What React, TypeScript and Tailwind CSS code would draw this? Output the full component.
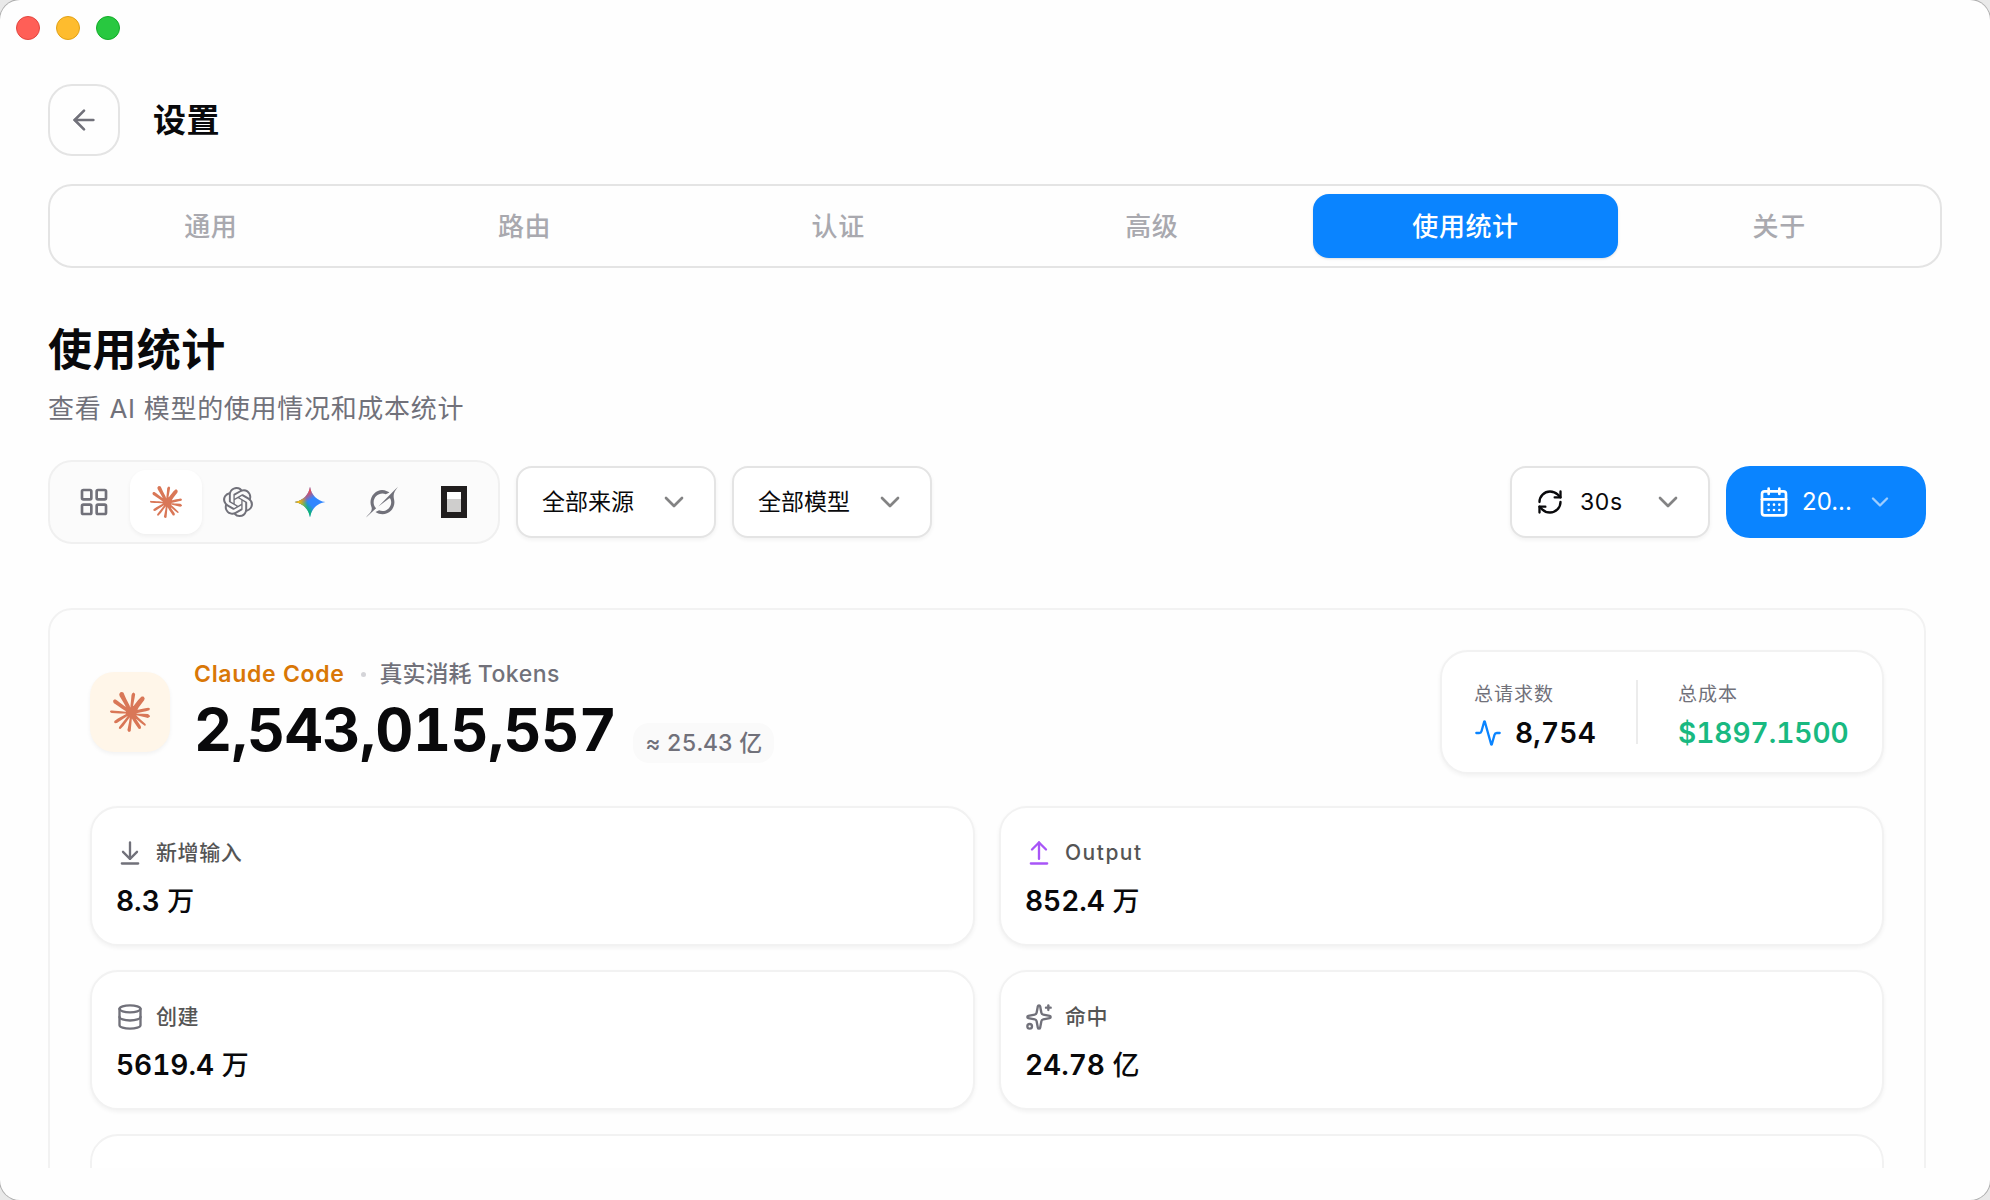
import type { ReactNode } from "react";
import {
    Activity,
    ArrowDownToLine,
    ArrowLeft,
    ArrowUpFromLine,
    CalendarDays,
    ChevronDown,
    Database,
    LayoutGrid,
    RefreshCw,
    Sparkles,
} from "lucide-react";
import { SiOpenai } from "react-icons/si";

const tabs = ["通用", "路由", "认证", "高级", "使用统计", "关于"];

function ClaudeIcon({ className }: { className?: string }) {
    return (
        <svg viewBox="0 0 24 24" fill="#D97757" className={className}>
            <path d="m4.7144 15.9555 4.7174-2.6471.079-.2307-.079-.1275h-.2307l-.7893-.0486-2.6956-.0729-2.3375-.0971-2.2646-.1214-.5707-.1215-.5343-.7042.0546-.3522.4797-.3218.686.0608 1.5179.1032 2.2767.1578 1.6514.0972 2.4468.255h.3886l.0546-.1579-.1336-.0971-.1032-.0972L6.973 9.8356l-2.55-1.6879-1.3356-.9714-.7225-.4918-.3643-.4614-.1578-1.0078.6557-.7225.8803.0607.2246.0607.8925.686 1.9064 1.4754 2.4893 1.8336.3643.3035.1457-.1032.0182-.0728-.164-.2733-1.3539-2.4467-1.445-2.4893-.6435-1.032-.17-.6194c-.0607-.255-.1032-.4674-.1032-.7285L6.287.1335 6.6997 0l.9957.1336.419.3642.6192 1.4147 1.0018 2.2282 1.5543 3.0296.4553.8985.2429.8318.091.255h.1579v-.1457l.1275-1.706.2368-2.0947.2307-2.6957.0789-.7589.3764-.9107.7468-.4918.5828.2793.4797.686-.0668.4433-.2853 1.8517-.5586 2.9021-.3643 1.9429h.2125l.2429-.2429.9835-1.3053 1.6514-2.0643.7286-.8196.85-.9046.5464-.4311h1.0321l.759 1.1293-.34 1.1657-1.0625 1.3478-.8804 1.1414-1.2628 1.7-.7893 1.36.0729.1093.1882-.0183 2.8535-.607 1.5421-.2794 1.8396-.3157.8318.3886.091.3946-.3278.8075-1.967.4857-2.3072.4614-3.4364.8136-.0425.0304.0486.0607 1.5482.1457.6618.0364h1.621l3.0175.2247.7892.522.4736.6376-.079.4857-1.2142.6193-1.6393-.3886-3.825-.9107-1.3113-.3279h-.1822v.1093l1.0929 1.0686 2.0035 1.8092 2.5075 2.3314.1275.5768-.3218.4554-.34-.0486-2.2039-1.6575-.85-.7468-1.9246-1.621h-.1275v.17l.4432.6496 2.3436 3.5214.1214 1.0807-.17.3521-.6071.2125-.6679-.1214-1.3721-1.9246L14.38 17.959l-1.1414-1.9428-.1397.079-.674 7.2552-.3156.3703-.7286.2793-.6071-.4614-.3218-.7468.3218-1.4753.3886-1.9246.3157-1.53.2853-1.9004.17-.6314-.0121-.0425-.1397.0182-1.4328 1.9672-2.1796 2.9446-1.7243 1.8456-.4128.164-.7164-.3704.0667-.6618.4008-.5889 2.386-3.0357 1.4389-1.882.929-1.0868-.0062-.1579h-.0546l-6.3385 4.1164-1.1293.1457-.4857-.4554.0608-.7467.2307-.2429 1.9064-1.3114Z" />
        </svg>
    );
}

function GeminiIcon({ className }: { className?: string }) {
    const star = "M12 .5C12.9 6.6 17.4 11.1 23.5 12 17.4 12.9 12.9 17.4 12 23.5 11.1 17.4 6.6 12.9.5 12 6.6 11.1 11.1 6.6 12 .5Z";
    return (
        <svg viewBox="0 0 24 24" className={className}>
            <defs>
                <linearGradient id="gm-green" x1="7" y1="15.5" x2="11" y2="12" gradientUnits="userSpaceOnUse">
                    <stop stopColor="#08B962" />
                    <stop offset="1" stopColor="#08B962" stopOpacity="0" />
                </linearGradient>
                <linearGradient id="gm-red" x1="8" y1="5.5" x2="11.5" y2="11" gradientUnits="userSpaceOnUse">
                    <stop stopColor="#F94543" />
                    <stop offset="1" stopColor="#F94543" stopOpacity="0" />
                </linearGradient>
                <linearGradient id="gm-yellow" x1="3.5" y1="13.5" x2="17.5" y2="12" gradientUnits="userSpaceOnUse">
                    <stop stopColor="#FABC12" />
                    <stop offset=".46" stopColor="#FABC12" stopOpacity="0" />
                </linearGradient>
            </defs>
            <path d={star} fill="#3186FF" />
            <path d={star} fill="url(#gm-green)" />
            <path d={star} fill="url(#gm-red)" />
            <path d={star} fill="url(#gm-yellow)" />
        </svg>
    );
}

function GrokIcon({ className }: { className?: string }) {
    return (
        <svg viewBox="0 0 24 24" fill="currentColor" className={className}>
            <path d="M9.27 15.29l7.978-5.897c.391-.29.95-.177 1.137.272.98 2.369.542 5.215-1.41 7.169-1.951 1.954-4.667 2.382-7.149 1.406l-2.711 1.257c3.889 2.661 8.611 2.003 11.562-.953 2.341-2.344 3.066-5.539 2.388-8.42l.006.007c-.983-4.232.242-5.924 2.75-9.383.06-.082.12-.164.179-.248l-3.301 3.305v-.01L9.267 15.292M7.623 16.723c-2.792-2.67-2.31-6.801.071-9.184 1.761-1.763 4.647-2.483 7.166-1.425l2.705-1.25a7.808 7.808 0 00-1.829-1A8.975 8.975 0 005.984 5.83c-2.533 2.536-3.33 6.436-1.962 9.764 1.022 2.487-.653 4.246-2.34 6.022-.599.63-1.199 1.259-1.682 1.925l7.62-6.815" />
        </svg>
    );
}

function OpenCodeIcon({ className }: { className?: string }) {
    return (
        <svg viewBox="0 0 26 32" className={className}>
            <path d="M0 0h26v32H0z" fill="#211E1E" />
            <path d="M6 6h14v7H6z" fill="#fff" />
            <path d="M6 13h14v13H6z" fill="#CFCECD" />
        </svg>
    );
}

const apps = [
    { key: "all", icon: <LayoutGrid className="size-8" /> },
    { key: "claude", icon: <ClaudeIcon className="size-8" />, active: true },
    { key: "codex", icon: <SiOpenai className="size-[30px]" /> },
    { key: "gemini", icon: <GeminiIcon className="size-8" /> },
    { key: "grok", icon: <GrokIcon className="size-8" /> },
    { key: "opencode", icon: <OpenCodeIcon className="h-8 w-[26px]" /> },
];

const metrics = [
    { label: "新增输入", value: "8.3", unit: "万", icon: <ArrowDownToLine className="size-7 text-[#71717a]" /> },
    { label: "Output", value: "852.4", unit: "万", latin: true, icon: <ArrowUpFromLine className="size-7 text-[#a855f7]" /> },
    { label: "创建", value: "5619.4", unit: "万", icon: <Database className="size-7 text-[#71717a]" /> },
    { label: "命中", value: "24.78", unit: "亿", icon: <Sparkles className="size-7 text-[#71717a]" /> },
];

function Select({ icon, children }: { icon?: ReactNode; children: ReactNode }) {
    return (
        <button className="flex h-[72px] w-[200px] items-center justify-between rounded-2xl border-2 border-[#e4e4e4] bg-white px-6 text-[23px] text-[#09090b] shadow-[0_2px_4px_rgba(0,0,0,0.05)]">
            <span className="flex items-center gap-4">
                {icon}
                <span>{children}</span>
            </span>
            <ChevronDown className="size-8 opacity-50" />
        </button>
    );
}

export default function App() {
    return (
        <div className="h-[1200px] w-[1990px] overflow-hidden bg-[#e9e9e9] font-['Inter','Noto_Sans_CJK_SC',sans-serif]">
            <div className="flex h-full flex-col overflow-hidden rounded-[20px] bg-[#fefefe] text-[#09090b] ring-1 ring-black/25">
                {/* Window controls */}
                <div className="flex gap-4 px-4 pt-4">
                    <span className="size-6 rounded-full border border-[#e2463f] bg-[#ff5f57]" />
                    <span className="size-6 rounded-full border border-[#e1a116] bg-[#febc2e]" />
                    <span className="size-6 rounded-full border border-[#12ac28] bg-[#28c840]" />
                </div>

                {/* Header */}
                <header className="mt-11 flex items-center gap-8 px-12">
                    <button className="flex size-[72px] items-center justify-center rounded-[24px] border-2 border-[#e4e4e4] text-[#71717a]">
                        <ArrowLeft className="size-8" />
                    </button>
                    <h1 className="pt-0.5 pl-px text-[33px] font-semibold tracking-[0.5px]">设置</h1>
                </header>

                <main className="mt-7 flex h-[984px] flex-col overflow-hidden px-12">
                    {/* Tabs */}
                    <nav className="grid h-[84px] shrink-0 grid-cols-6 gap-2 rounded-[24px] border-2 border-[#e4e4e4] p-2">
                        {tabs.map((tab) => (
                            <button
                                key={tab}
                                className={`rounded-2xl text-[26px] font-medium tracking-[0.6px] ${tab === "使用统计"
                                    ? "bg-[#0a84ff] text-white shadow-sm"
                                    : "text-[#a9a9af]"
                                }`}
                            >
                                {tab}
                            </button>
                        ))}
                    </nav>

                    <div className="mt-[54px] pr-4">
                        <h2 className="text-[44px] leading-[56px] font-bold tracking-[0.4px]">使用统计</h2>
                        <p className="mt-[11px] text-[26px] leading-[40px] tracking-[0.7px] text-[#71717a]">查看 AI 模型的使用情况和成本统计</p>

                        {/* Filters */}
                        <div className="mt-[31px] flex items-center justify-between">
                            <div className="flex items-center gap-4">
                                <div className="flex h-[84px] w-[452px] items-center rounded-[24px] border-2 border-[#f0f0f0] bg-[#fbfbfb] px-2 text-[#71717a]">
                                    {apps.map((app) => (
                                        <button
                                            key={app.key}
                                            className={`flex h-16 w-[72px] items-center justify-center rounded-2xl ${app.active ? "bg-white shadow-[0_2px_4px_rgba(0,0,0,0.05)]" : ""}`}
                                        >
                                            {app.icon}
                                        </button>
                                    ))}
                                </div>
                                <Select>全部来源</Select>
                                <Select>全部模型</Select>
                            </div>
                            <div className="flex items-center gap-4">
                                <Select icon={<RefreshCw className="size-7" />}>
                                    <span className="tracking-[0.6px]">30s</span>
                                </Select>
                                <button className="flex h-[72px] w-[200px] items-center rounded-[24px] bg-[#0a84ff] px-8 text-[24px] text-white">
                                    <CalendarDays className="size-8" />
                                    <span className="ml-3 flex-1 text-left">20...</span>
                                    <ChevronDown className="size-7 opacity-60" />
                                </button>
                            </div>
                        </div>

                        {/* Usage summary */}
                        <section className="mt-16 h-[700px] rounded-[24px] border-2 border-[#f2f2f2] px-10 pt-10">
                            <div className="flex items-center justify-between">
                                <div className="flex items-center gap-6">
                                    <div className="flex size-20 items-center justify-center rounded-[24px] bg-[#fff6e9] shadow-[0_2px_4px_rgba(0,0,0,0.05)]">
                                        <ClaudeIcon className="size-10" />
                                    </div>
                                    <div>
                                        <div className="flex items-center gap-4 text-[23px] leading-8">
                                            <span className="font-semibold tracking-[0.7px] text-[#d97706]">Claude Code</span>
                                            <span className="size-[5px] rounded-full bg-[#d4d4d8]" />
                                            <span className="-ml-0.5 font-medium text-[#71717a]">
                                                真实消耗 <span className="tracking-[0.5px]">Tokens</span>
                                            </span>
                                        </div>
                                        <div className="mt-1 flex items-baseline gap-[17px] tabular-nums">
                                            <span className="text-[59px] leading-[72px] font-bold tracking-[-0.5px]">2,543,015,557</span>
                                            <span className="h-10 rounded-2xl bg-[#fafafa] px-3 text-[23px] leading-10 font-medium tracking-[0.1px] text-[#71717a]">≈ 25.43 亿</span>
                                        </div>
                                    </div>
                                </div>
                                <div className="flex h-[124px] w-[444px] items-center rounded-[28px] border-2 border-[#f2f2f2] bg-white px-8 shadow-[0_2px_4px_rgba(0,0,0,0.05)]">
                                    <div className="pt-[7px]">
                                        <div className="text-[19px] leading-8 tracking-[1px] text-[#71717a]">总请求数</div>
                                        <div className="mt-0.5 flex items-center gap-[13px] text-[28px] leading-10 font-semibold tabular-nums">
                                            <Activity className="size-7 text-[#0a84ff]" />
                                            <span className="tracking-[0.2px]">8,754</span>
                                        </div>
                                    </div>
                                    <div className="mx-10 h-16 w-0.5 bg-[#ececec]" />
                                    <div className="pt-[7px]">
                                        <div className="text-[19px] leading-8 tracking-[1px] text-[#71717a]">总成本</div>
                                        <div className="mt-0.5 text-[28px] leading-10 font-semibold text-[#19b981] tabular-nums">$1897.1500</div>
                                    </div>
                                </div>
                            </div>

                            <div className="mt-8 grid grid-cols-2 gap-6">
                                {metrics.map((metric) => (
                                    <div key={metric.label} className="h-[140px] rounded-[28px] border-2 border-[#f2f2f2] bg-white px-6 pt-[25px] shadow-[0_2px_4px_rgba(0,0,0,0.05)]">
                                        <div className="flex h-10 items-center gap-3 text-[21px] font-medium text-[#555555]">
                                            {metric.icon}
                                            <span className={metric.latin ? "tracking-[1.5px]" : "tracking-[0.6px]"}>{metric.label}</span>
                                        </div>
                                        <div className="mt-2 text-[28px] leading-10 font-semibold tabular-nums">
                                            {metric.value} <span className="text-[27px] font-medium">{metric.unit}</span>
                                        </div>
                                    </div>
                                ))}
                                <div className="col-span-2 h-[140px] rounded-[28px] border-2 border-[#f2f2f2] bg-white" />
                            </div>
                        </section>
                    </div>
                </main>
            </div>
        </div>
    );
}
